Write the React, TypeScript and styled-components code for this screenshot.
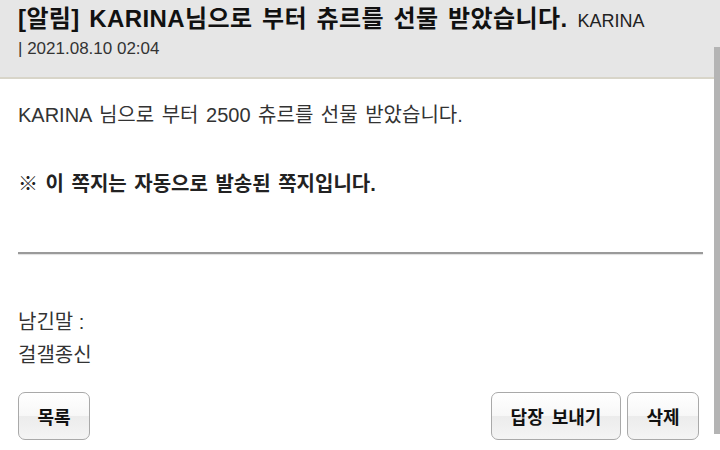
import React from "react";
import styled, { createGlobalStyle } from "styled-components";

const FONT = `"Liberation Sans", "Noto Sans CJK KR", sans-serif`;

const Global = createGlobalStyle`
  html, body { margin: 0; padding: 0; background: #ffffff; }
  body {
    width: 720px; height: 450px; overflow: hidden;
    font-family: ${FONT};
    color: #222;
  }
`;

const Page = styled.div`
  position: relative;
  width: 720px;
  height: 450px;
  display: flex;
  flex-direction: column;
`;

const Header = styled.header`
  background: #e6e6e6;
  border-bottom: 2px solid #d8d5c9;
  padding: 3px 18px 0;
  height: 74px;
  box-sizing: content-box;
`;

const Title = styled.h1`
  margin: 0;
  font-size: 24px;
  font-weight: 700;
  line-height: 32px;
  letter-spacing: 0.4px;
  word-spacing: 2.5px;
  color: #111;
  white-space: nowrap;
`;

const Sender = styled.span`
  font-size: 18px;
  font-weight: 400;
  margin-left: 10px;
  letter-spacing: 0;
  word-spacing: 0;
  color: #222;
`;

const DateLine = styled.div`
  font-size: 17px;
  line-height: 22px;
  color: #333;
  margin-top: 1px;
`;

const Content = styled.main`
  padding: 0 17px 0 18px;
  display: flex;
  flex-direction: column;
`;

const Message = styled.p`
  margin: 21px 0 0;
  font-size: 20px;
  line-height: 30px;
  word-spacing: 2px;
  color: #333;
`;

const Notice = styled.p`
  margin: 39px 0 0;
  font-size: 20px;
  font-weight: 700;
  line-height: 30px;
  word-spacing: 2px;
  color: #222;
`;

const Divider = styled.hr`
  margin: 53px 0 0;
  border: none;
  height: 2px;
  background: #9a9a9a;
  box-shadow: 0 1px 1px #e0e0e0;
`;

const Label = styled.div`
  font-size: 20px;
  line-height: 33px;
  color: #333;
  &:first-of-type { margin-top: 52px; }
`;

const Actions = styled.div`
  display: flex;
  gap: 6px;
  margin-top: 20px;
  padding-right: 4px;
`;

const Spacer = styled.div`
  flex: 1;
`;

const Button = styled.button<{ $w: number }>`
  width: ${(p) => p.$w}px;
  height: 48px;
  border: 1px solid #a9a9a9;
  border-radius: 7px;
  background: linear-gradient(#ffffff 0%, #f7f7f7 50%, #ececec 51%, #f4f4f4 100%);
  font-family: ${FONT};
  font-size: 18px;
  font-weight: 700;
  word-spacing: 3px;
  color: #111;
  padding: 0;
  box-shadow: inset 0 1px 0 #fff;
`;

const Scrollbar = styled.div`
  position: absolute;
  right: 0;
  top: 47px;
  width: 6px;
  height: 387px;
  background: #b4b4b4;
`;

export default function App() {
  return (
    <>
      <Global />
      <Page>
        <Header>
          <Title>
            [알림] KARINA님으로 부터 츄르를 선물 받았습니다.
            <Sender>KARINA</Sender>
          </Title>
          <DateLine>| 2021.08.10 02:04</DateLine>
        </Header>
        <Content>
          <Message>KARINA 님으로 부터 2500 츄르를 선물 받았습니다.</Message>
          <Notice>※ 이 쪽지는 자동으로 발송된 쪽지입니다.</Notice>
          <Divider />
          <Label>남긴말 :</Label>
          <Label>걸갤종신</Label>
          <Actions>
            <Button $w={72}>목록</Button>
            <Spacer />
            <Button $w={130}>답장 보내기</Button>
            <Button $w={72}>삭제</Button>
          </Actions>
        </Content>
        <Scrollbar />
      </Page>
    </>
  );
}
